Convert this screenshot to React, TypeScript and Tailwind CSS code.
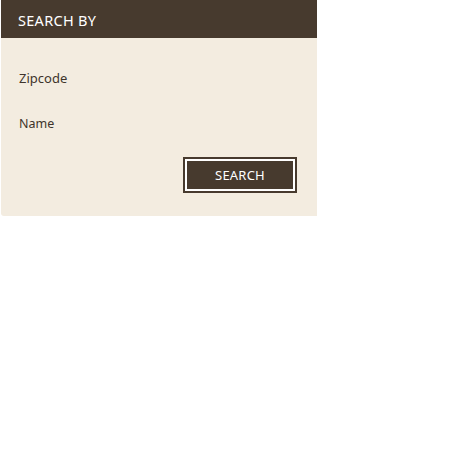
export default function App() {
  return (
    <div className="w-[473px] h-[464px] bg-white" style={{ fontFamily: '"Noto Sans", sans-serif' }}>
      <div className="ml-px w-[316px] h-[216px] bg-[#f3ece0] rounded-bl-[3px] flex flex-col">
        {/* Header */}
        <div className="h-[38px] bg-[#473a2e] flex items-center pl-[17px]">
          <h2 className="text-[14.5px] text-white tracking-[0.3px] pt-[3px]">SEARCH BY</h2>
        </div>

        {/* Fields */}
        <div className="pl-[18px] pt-[34px] text-[#3e342b]">
          <p className="text-[13px] leading-none">Zipcode</p>
          <p className="text-[12.5px] leading-none mt-[33px]">Name</p>
        </div>

        <div className="flex justify-end pr-[20px] mt-[26px]">
          <button className="w-[114px] h-[36px] bg-[#473a2e] border-2 border-[#473a2e] p-0">
            <span className="flex h-full w-full items-center justify-center border-2 border-white text-white text-[13px] tracking-[0.2px] pt-[2px]">
              SEARCH
            </span>
          </button>
        </div>
      </div>
    </div>
  );
}
